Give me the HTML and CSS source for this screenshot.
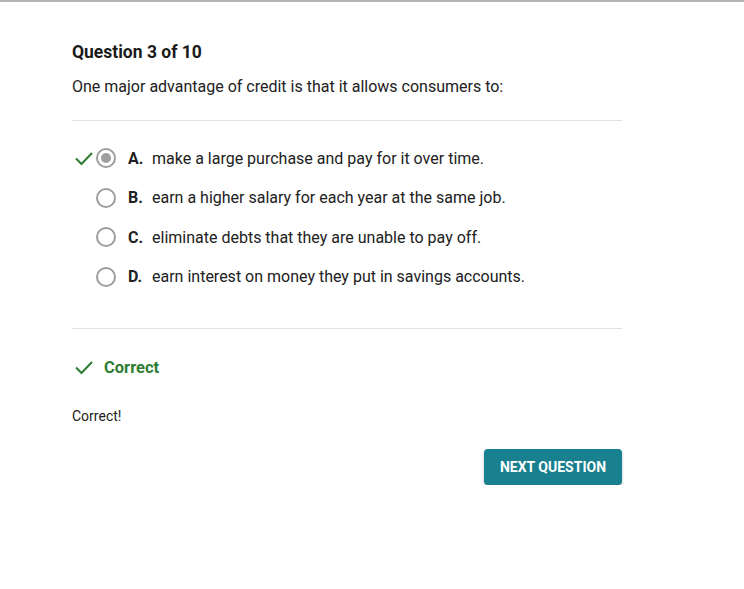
FILE: index.html
```html
<!DOCTYPE html>
<html>
<head>
<meta charset="utf-8">
<link rel="stylesheet" href="styles.css">
</head>
<body>
<div class="topbar"></div>
<main class="quiz">
  <h1 class="title">Question 3 of 10</h1>
  <p class="prompt">One major advantage of credit is that it allows consumers to:</p>
  <hr class="rule">
  <ul class="options">
    <li class="option">
      <span class="mark">
        <svg width="20" height="16" viewBox="0 0 20 16"><path d="M2 8.5 L7.5 14 L18 3" fill="none" stroke="#2e7d32" stroke-width="2"/></svg>
      </span>
      <span class="radio checked"></span>
      <span class="letter">A.</span>
      <span class="text">make a large purchase and pay for it over time.</span>
    </li>
    <li class="option">
      <span class="mark"></span>
      <span class="radio"></span>
      <span class="letter">B.</span>
      <span class="text">earn a higher salary for each year at the same job.</span>
    </li>
    <li class="option">
      <span class="mark"></span>
      <span class="radio"></span>
      <span class="letter">C.</span>
      <span class="text">eliminate debts that they are unable to pay off.</span>
    </li>
    <li class="option">
      <span class="mark"></span>
      <span class="radio"></span>
      <span class="letter">D.</span>
      <span class="text">earn interest on money they put in savings accounts.</span>
    </li>
  </ul>
  <hr class="rule rule-bottom">
  <div class="result">
    <svg width="20" height="16" viewBox="0 0 20 16"><path d="M2 8.5 L7.5 14 L18 3" fill="none" stroke="#2e7d32" stroke-width="2"/></svg>
    <span class="result-label">Correct</span>
  </div>
  <p class="feedback">Correct!</p>
  <div class="actions">
    <button class="next">NEXT QUESTION</button>
  </div>
</main>
</body>
</html>
```
FILE: styles.css
```css
html, body {
  margin: 0;
  padding: 0;
  background: #fff;
  font-family: Roboto, "Liberation Sans", sans-serif;
  color: #212121;
}
.topbar {
  height: 2px;
  background: #b4b4b4;
}
.quiz {
  width: 550px;
  margin-left: 72px;
  padding-top: 38px;
}
.title {
  margin: 0;
  font-size: 17.5px;
  font-weight: 700;
  line-height: 24px;
  color: #1a1a1a;
}
.prompt {
  margin: 12px 0 0;
  font-size: 16px;
  line-height: 22px;
}
.rule {
  border: 0;
  border-top: 1px solid #e0e0e0;
  margin: 22px 0 0;
}
.options {
  list-style: none;
  margin: 0;
  padding: 26px 0 0;
  display: flex;
  flex-direction: column;
  gap: 17.6px;
}
.option {
  display: flex;
  align-items: center;
  height: 22px;
  font-size: 16px;
}
.mark {
  width: 24px;
  display: flex;
  align-items: center;
  padding-left: 2px;
  box-sizing: border-box;
}
.radio {
  width: 16px;
  height: 16px;
  border: 2px solid #9e9e9e;
  border-radius: 50%;
  position: relative;
  flex-shrink: 0;
}
.radio.checked::after {
  content: "";
  position: absolute;
  left: 3px;
  top: 3px;
  width: 10px;
  height: 10px;
  border-radius: 50%;
  background: #9e9e9e;
}
.letter {
  font-weight: 700;
  margin-left: 12px;
  width: 24px;
}
.text {
  color: #212121;
}
.rule-bottom {
  margin-top: 40px;
}
.result {
  display: flex;
  align-items: center;
  margin-top: 29px;
  padding-left: 2px;
  gap: 10px;
}
.result-label {
  font-weight: 700;
  font-size: 16.5px;
  color: #2e7d32;
}
.feedback {
  margin: 29px 0 0;
  font-size: 14px;
  line-height: 20px;
}
.actions {
  display: flex;
  justify-content: flex-end;
  margin-top: 23px;
}
.next {
  width: 138px;
  height: 36px;
  border: 0;
  border-radius: 4px;
  background: #18808f;
  color: #fff;
  font-family: Roboto, "Liberation Sans", sans-serif;
  font-weight: 700;
  font-size: 14px;
  box-shadow: 0 2px 3px rgba(0,0,0,0.25);
}
```
